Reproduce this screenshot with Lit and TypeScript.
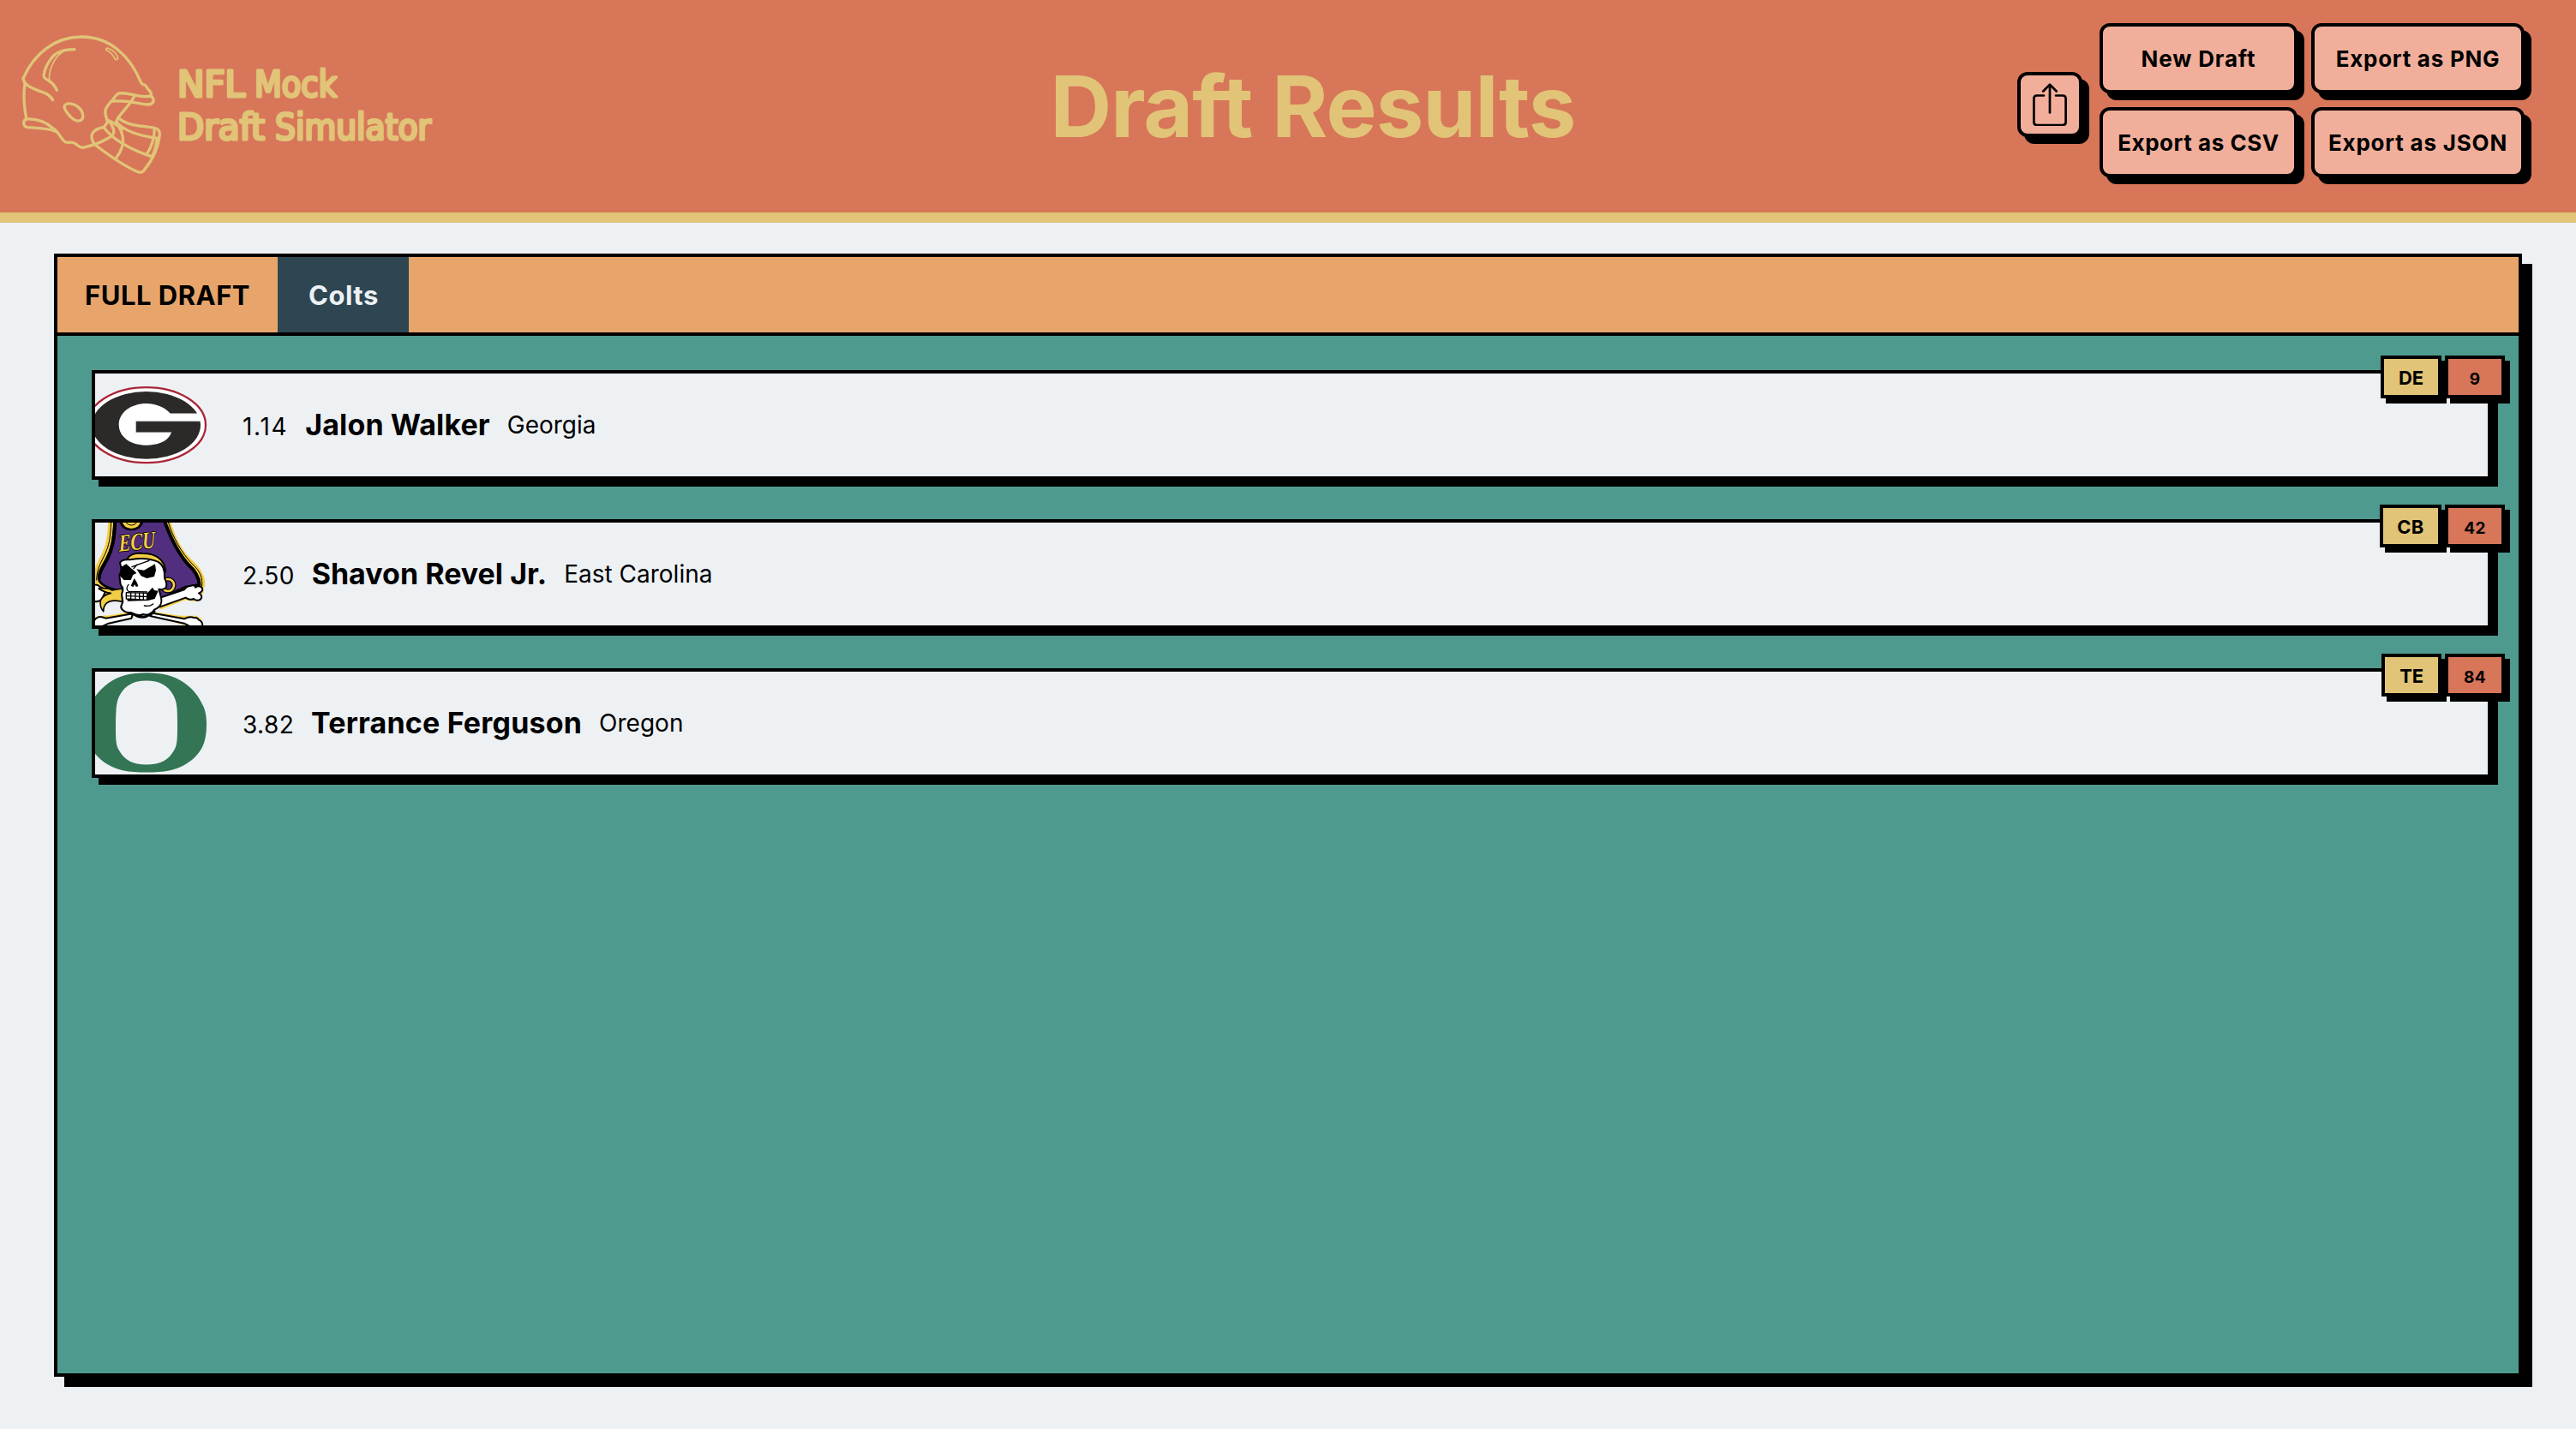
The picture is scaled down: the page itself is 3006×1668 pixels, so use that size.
import { LitElement, html, css, svg } from "lit";
import { customElement, property } from "lit/decorators.js";
import { styleMap } from "lit/directives/style-map.js";

interface Pick {
  slot: string;
  slotTracking: number;
  name: string;
  nameTracking: number;
  school: string;
  logo: "georgia" | "ecu" | "oregon";
  position: string;
  rank: number;
}

const PICKS: Pick[] = [
  { slot: "1.14", slotTracking: 1.7, name: "Jalon Walker", nameTracking: 0.1, school: "Georgia", logo: "georgia", position: "DE", rank: 9 },
  { slot: "2.50", slotTracking: 0.3, name: "Shavon Revel Jr.", nameTracking: 0.02, school: "East Carolina", logo: "ecu", position: "CB", rank: 42 },
  { slot: "3.82", slotTracking: 0.4, name: "Terrance Ferguson", nameTracking: 0.18, school: "Oregon", logo: "oregon", position: "TE", rank: 84 },
];

const ACTIONS = [
  { label: "New Draft", tracking: 0.85 },
  { label: "Export as PNG", tracking: 0.75 },
  { label: "Export as CSV", tracking: 0.55 },
  { label: "Export as JSON", tracking: 0.8 },
];

const px = (n: number) => `${n}px`;

const georgia = svg`
  <g transform="translate(-61 -156) scale(.33333)">
    <ellipse cx="362" cy="648.5" rx="208" ry="132" fill="#fff" stroke="#ab2536" stroke-width="7"></ellipse>
    <ellipse cx="362" cy="649" rx="190" ry="118" fill="#2c2a29"></ellipse>
    <path fill="#fff" d="M447 608C425 585 394 573 363 573C308 573 266 605 266 647C266 690 307 719 361 719C409 719 441 702 450 674L326 674L326 635L553 635L558 612L540 608Z"></path>
    <path fill="none" stroke="#b5b5b5" stroke-width="2" d="M447 608H540M326 635H552M326 674H450"></path>
  </g>`;

const oregon = svg`
  <path fill="#337554" fill-rule="evenodd" d="M59.8 1.300C78 1.300 93 5 104 13C115 21 121 29 125 38C128.500 44 130 52 130 61C130 74 128 83 124 90C119 98 113 104 104 109C94 115 81 117.500 59.800 117.500C38 117.500 26 115 16 109C7 104 1 98 -4 90C-8 83 -10.500 74 -10.500 61C-10.500 52 -9 44 -5 38C-1 29 5 21 16 13C27 5 42 1.300 59.800 1.300ZM59.800 10.500C45 10.500 35 16 29 27C24.500 35 24.500 42 24 60C24 78 24 86 28 92C34 103 44 108.500 59.800 108.500C76 108.500 86 103 92 92C96 86 96 78 96 60C96 42 95.500 35 91 27C85 16 75 10.500 59.800 10.500Z"></path>`;

const ecu = svg`
  <g transform="translate(-11 -15) scale(.33333)" stroke-linejoin="round" stroke-linecap="round">
    <g>
      <path fill="#f3ce45" stroke="#f3ce45" stroke-width="6" d="M255 312L345 275L357 266L372 264L382 268L410 272L410 290L400 292L406 306L390 318L362 316L350 312L262 346ZM28 268L52 262L70 275L80 290L60 318L28 324ZM235 360L330 374L385 374L403 384L410 410H370L345 400L235 372ZM160 360L85 373L45 375L28 382V410H45L78 398L165 375Z"></path>
      <path fill="#f3ce45" stroke="#f3ce45" stroke-width="3" d="M80 40C78 100 72 125 55 160C40 188 30 210 30 235L40 268L120 290L265 312L372 264L416 270C420 245 408 210 375 180C340 150 312 100 296 40Z"></path>
      <path fill="none" stroke="#000" stroke-width="3" d="M89 40C87 105 80 130 64 163C46 198 39 215 38 246M288 40C304 95 335 150 372 189C402 215 410 240 407 268"></path>
      <path fill="#522e7f" stroke="#000" stroke-width="8" d="M101 36C98 108 90 140 72 173C54 205 45 220 47 248C58 270 100 280 122 284L265 310L350 270L398 262C397 240 390 220 360 193C325 155 298 100 274 36Z"></path>
      <path fill="none" stroke="#000" stroke-width="12" d="M103 40C100 108 92 140 76 172C58 204 46 220 47 240M276 40C298 100 325 155 360 193C385 216 396 236 398 262"></path>
      <ellipse cx="160" cy="39" rx="42" ry="34" fill="#000"></ellipse>
      <ellipse cx="160" cy="38" rx="32" ry="28" fill="#f3ce45"></ellipse>
      <ellipse cx="160" cy="36" rx="21" ry="18" fill="none" stroke="#000" stroke-width="3"></ellipse>
    </g>
    <g fill="#fff" stroke="#000" stroke-width="6">
      <path d="M262 308L345 280Q354 266 370 266Q382 262 384 272Q398 262 408 274Q412 286 396 292Q412 300 402 314Q390 322 378 312Q364 318 350 308L260 340Z"></path>
      <path d="M20 266Q40 258 50 270L72 280L60 306Q50 326 28 320Z"></path>
      <path d="M235 362L345 382Q365 372 378 378Q392 376 396 386Q412 392 408 412H372L345 398L225 372Z"></path>
      <path d="M165 364L70 380Q48 370 38 380Q28 384 24 412H50L80 398L160 380Z"></path>
    </g>
    <path fill="#f3ce45" stroke="#000" stroke-width="5" d="M45 276Q80 272 92 282L128 276L128 322Q90 312 72 328Q62 338 62 356Q48 340 52 318Q60 298 88 292Q66 290 45 276Z"></path>
    <circle cx="288" cy="264" r="21" fill="none" stroke="#000" stroke-width="15"></circle>
    <circle cx="288" cy="264" r="21" fill="none" stroke="#f3ce45" stroke-width="8"></circle>
    <path fill="#f3ce45" stroke="#000" stroke-width="6" d="M143 180C148 156 175 150 200 153C245 153 276 174 280 218C255 185 200 170 143 184Z"></path>
    <path fill="#fff" stroke="#000" stroke-width="6" d="M120 186C130 168 148 178 160 174C195 168 230 172 252 182C272 192 278 212 276 240C282 250 286 262 280 274L266 280L256 278L262 300C270 325 264 340 240 350C234 362 220 372 202 366C186 374 172 366 158 360C140 362 122 350 124 338L130 322L126 296C134 280 130 272 122 262L118 230L126 210Z"></path>
    <path fill="#000" d="M122 202L142 190L158 204L170 214L178 222L166 228L158 246L134 246L120 232ZM178 208L204 212L243 190L246 212L240 234L214 240L194 232L186 220ZM170 240L180 256L184 268L176 270L172 262L166 270L158 266ZM216 292L234 272L240 282L254 284L242 312L218 318L146 320V312H216Z"></path>
    <path fill="none" stroke="#000" stroke-width="4" d="M162 200L222 178M168 206L180 192M150 262Q138 276 150 286L215 288M205 336Q224 340 236 330"></path>
    <path fill="#fff" stroke="#000" stroke-width="4" d="M142 290L216 292L214 316L142 312Z"></path>
    <path fill="none" stroke="#000" stroke-width="4" d="M142 302L214 304M158 291V313M174 291V314M188 291V315M202 291V316"></path>
    <path fill="none" stroke="#000" stroke-width="9" d="M150 362Q165 362 180 372Q200 380 215 372L240 356"></path>
    <text class="ecu" transform="translate(117 146) rotate(-6) skewX(-4)" textLength="128" lengthAdjust="spacingAndGlyphs">ECU</text>
  </g>`;

const LOGOS = { georgia, oregon, ecu };

@customElement("site-brand")
export class SiteBrand extends LitElement {
  static styles = css`
    :host { display: block; }
    .art { display: block; width: 520px; height: 248px; }
    .line { fill: none; stroke: #e1c477; stroke-width: 10; stroke-linecap: round; stroke-linejoin: round; }
    .thin { stroke-width: 5; }
    .word {
      font: 400 43px "DejaVu Sans Condensed", "DejaVu Sans", sans-serif; font-variant-ligatures: none;
      fill: #e1c477; stroke: #e1c477; stroke-width: 3.2; stroke-linejoin: round;
    }
  `;
  render() {
    return html`
      <svg class="art" viewBox="0 0 520 248">
        <g class="line" transform="translate(0 20) scale(.33333)">
          <path d="M81 215C120 125 195 69 286 69C385 69 455 135 494 230Q498 236 508 238Q514 244 518 252Q532 264 529 276Q500 281 468 272C445 268 425 263 413 268C402 275 398 288 385 300C372 316 366 325 369 340Q372 350 374 360"></path>
          <path d="M81 215Q83 226 90 233C105 250 135 257 160 267Q176 275 185 290M87 232Q79 290 92 354"></path>
          <path d="M92 357C135 355 165 370 186 390C205 400 212 425 228 437C240 442 252 434 262 442C278 454 285 460 298 455C330 448 350 440 375 426C398 415 404 402 394 385Q386 365 374 360"></path>
          <path d="M92 357Q82 360 83 373Q85 385 96 386C130 388 165 388 195 400"></path>
          <path d="M261 113C225 113 200 120 183 140C165 162 156 185 153 204Q153 214 170 222Q190 235 199 256"></path>
          <path class="thin" d="M222 120C190 140 172 180 172 218"></path>
          <path class="thin" d="M377 108Q370 108 371 115Q392 124 402 146Q408 153 413 145Q408 120 377 108Z"></path>
          <path d="M227 309C235 297 262 303 275 316C290 328 294 348 287 358C277 368 260 363 248 350C237 337 220 320 227 309Z"></path>
          <path d="M529 277Q539 284 537 296Q532 306 518 306C480 304 455 290 395 294M471 275C455 312 415 340 407 366M407 366C412 380 425 390 430 420Q436 455 405 496"></path>
          <path d="M413 352C445 382 500 380 540 388Q560 392 559 410C555 460 530 505 503 538Q494 548 478 540C420 515 370 475 330 445Q318 425 322 410C330 392 350 388 364 385L378 366"></path>
          <path d="M407 366C440 405 500 418 553 424M375 360C400 368 408 378 428 392M364 387C400 435 460 465 536 490M541 391C540 425 530 455 515 478M549 427Q545 465 532 488"></path>
        </g>
        <text class="word" x="207" y="113" textLength="79" lengthAdjust="spacingAndGlyphs">NFL</text>
        <text class="word" x="297" y="113" textLength="96" lengthAdjust="spacingAndGlyphs">Mock</text>
        <text class="word" x="207" y="163" textLength="102" lengthAdjust="spacingAndGlyphs">Draft</text>
        <text class="word" x="321" y="163" textLength="182" lengthAdjust="spacingAndGlyphs">Simulator</text>
      </svg>
    `;
  }
}

@customElement("draft-pick")
export class DraftPick extends LitElement {
  @property({ attribute: false }) pick!: Pick;

  static styles = css`
    :host { display: block; }
    .card {
      position: relative; box-sizing: border-box; height: 128px; display: flex; align-items: center; gap: 20px;
      border: 4px solid #000; background: #edf1f4; box-shadow: 8px 8px 0 #000; font-size: 28px; white-space: nowrap;
    }
    .logo { display: block; width: 131px; height: 120px; margin-right: 21px; overflow: hidden; }
    .slot { padding-top: 4px; }
    .name { font-size: 34px; font-weight: 700; padding-bottom: 1px; }
    .badges { position: absolute; top: -21px; right: -20px; display: flex; gap: 4px; }
    .badge {
      box-sizing: border-box; height: 50px; display: flex; align-items: center; justify-content: center;
      border: 4px solid #000; box-shadow: 6px 6px 0 #000; font-weight: 700;
    }
    .position { padding: 2px 16.800px 0; background: #e1c477; font-size: 22px; }
    .rank { width: 70px; padding-top: 4px; background: #d87659; font-size: 19px; letter-spacing: .3px; }
    .ecu {
      font: italic 700 84px "Liberation Serif", serif;
      fill: #f3ce45; stroke: #000; stroke-width: 5; paint-order: stroke;
    }
  `;

  render() {
    const p = this.pick;
    return html`
      <div class="card">
        <svg class="logo" viewBox="0 0 131 120">${LOGOS[p.logo]}</svg>
        <span class="slot" style=${styleMap({ letterSpacing: px(p.slotTracking) })}>${p.slot}</span>
        <span class="name" style=${styleMap({ letterSpacing: px(p.nameTracking) })}>${p.name}</span>
        <span>${p.school}</span>
        <div class="badges">
          <span class="badge position">${p.position}</span>
          <span class="badge rank">${p.rank}</span>
        </div>
      </div>
    `;
  }
}

@customElement("app-root")
export class AppRoot extends LitElement {
  static styles = css`
    :host {
      display: flex; flex-direction: column; box-sizing: border-box; height: 1668px;
      background: #edf1f4; color: #000; font-family: Inter, "Liberation Sans", sans-serif;
    }
    .header {
      flex: none; display: flex; align-items: center; box-sizing: border-box; height: 260px;
      padding-right: 60px; background: #d87659; border-bottom: 12px solid #e1c477;
    }
    .brand { width: 710px; }
    .title {
      flex: 1; margin: 0; text-align: center; color: #e1c477; white-space: nowrap;
      font-size: 99.300px; line-height: 120px; font-weight: 700; letter-spacing: -.84px;
    }
    .actions { display: flex; align-items: flex-start; gap: 20px; height: 194px; }
    .btn {
      box-sizing: border-box; margin: 0; padding: 1px 0 0; border: 4px solid #000; border-radius: 12px;
      background: #f1af9b; box-shadow: 8px 8px 0 #000; color: #000;
      font: 700 26px/32px Inter, "Liberation Sans", sans-serif; white-space: nowrap;
    }
    .share { align-self: center; display: flex; align-items: center; justify-content: center; width: 76px; height: 76px; margin-top: -4px; }
    .share-icon { display: block; width: 40px; height: 50px; margin-bottom: 1px; }
    .grid { display: grid; grid-template-columns: 231px 249px; grid-auto-rows: 82px; gap: 16px; }
    .panel {
      display: flex; flex-direction: column; box-sizing: border-box; width: 2880px; height: 1311px;
      margin: 36px 0 0 63px; border: 4px solid #000; background: #4f9a8e; box-shadow: 12px 12px 0 #000;
    }
    .tabs { flex: none; display: flex; height: 88px; border-bottom: 4px solid #000; background: #e8a56b; }
    .tab {
      display: flex; align-items: center; box-sizing: border-box; width: 257px; padding-left: 32px;
      font-size: 31px; font-weight: 700; letter-spacing: .5px; white-space: nowrap;
    }
    .active { width: 153px; padding-left: 36px; background: #2e4652; color: #edf1f4; }
    .list { display: flex; flex-direction: column; gap: 46px; padding: 40px 32px 0 40px; }
  `;

  render() {
    return html`
      <header class="header">
        <site-brand class="brand"></site-brand>
        <h1 class="title">Draft Results</h1>
        <div class="actions">
          <button class="btn share" aria-label="Share">
            <svg class="share-icon" viewBox="0 0 40 50" fill="none" stroke="#000" stroke-width="2.700" stroke-linecap="round" stroke-linejoin="round">
              <path d="M13 14.500H5Q1.400 14.500 1.400 18V45.500Q1.400 49 5 49H35Q38.600 49 38.600 45.500V18Q38.600 14.500 35 14.500H27"></path>
              <path d="M20 34.500V1.800M12.300 9.500L20 1.600L27.700 9.500"></path>
            </svg>
          </button>
          <div class="grid">
            ${ACTIONS.map((a) => html`<button class="btn" style=${styleMap({ letterSpacing: px(a.tracking) })}>${a.label}</button>`)}
          </div>
        </div>
      </header>
      <main class="panel">
        <nav class="tabs">
          <span class="tab">FULL DRAFT</span>
          <span class="tab active">Colts</span>
        </nav>
        <section class="list">
          ${PICKS.map((p) => html`<draft-pick .pick=${p}></draft-pick>`)}
        </section>
      </main>
    `;
  }
}
